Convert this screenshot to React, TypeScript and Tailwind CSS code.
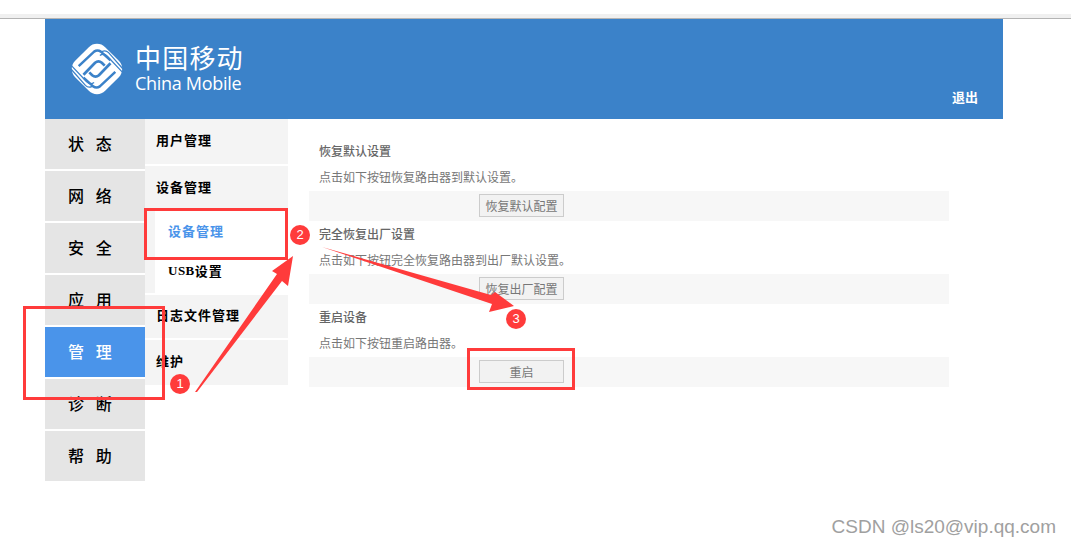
const cjk = "font-['Noto_Sans_CJK_SC',sans-serif]";

const navItems = ["状 态", "网 络", "安 全", "应 用", "管 理", "诊 断", "帮 助"];

const sections = [
  { title: "恢复默认设置", desc: "点击如下按钮恢复路由器到默认设置。", button: "恢复默认配置" },
  { title: "完全恢复出厂设置", desc: "点击如下按钮完全恢复路由器到出厂默认设置。", button: "恢复出厂配置" },
  { title: "重启设备", desc: "点击如下按钮重启路由器。", button: "重启" },
];

const LogoLines = () => (
  <>
    <path d="M9 25 L25 10 Q28.5 7.5 32 10 L42 19" strokeWidth="2.6" />
    <path d="M14 34 L26 21.5 Q29.5 18.5 33 21.5 L36 24.5" strokeWidth="2.8" />
    <path d="M1 24 L17 41 Q21 45 25 42" strokeWidth="1.3" />
    <path d="M1 28 L16 45 Q19 48 23 46" strokeWidth="1.3" />
  </>
);

const Logo = () => (
  <svg width="54" height="54" viewBox="0 0 56 56" className="shrink-0">
    <rect x="6" y="6" width="44" height="44" rx="12" fill="#fff" transform="rotate(45 28 28)" />
    <g fill="none" stroke="#3b82c9" strokeLinecap="butt">
      <LogoLines />
      <g transform="rotate(180 28 28)">
        <LogoLines />
      </g>
    </g>
  </svg>
);

const Annotations = () => (
  <>
    <svg width="1071" height="547" viewBox="0 0 1071 547" className="absolute left-0 top-0 pointer-events-none">
      <polygon points="195,392 277,274 272,271 293,256 288,286 282,281 197,392" fill="#ff3b3b" />
      <polygon points="322,247 491,295 495,292 514,306 489,312 492,304" fill="#ff3b3b" />
    </svg>
    <div className="absolute left-[23px] top-[306px] h-[94px] w-[142px] border-[3px] border-[#ff3b3b]" />
    <div className="absolute left-[144px] top-[208px] h-[52px] w-[144px] border-[3px] border-[#ff3b3b]" />
    <div className="absolute left-[467px] top-[348px] h-[42px] w-[108px] border-[3px] border-[#ff3b3b]" />
    {[
      { n: "1", c: "left-[170px] top-[374px]" },
      { n: "2", c: "left-[290px] top-[225px]" },
      { n: "3", c: "left-[506px] top-[309px]" },
    ].map((b) => (
      <div
        key={b.n}
        className={`absolute ${b.c} flex h-5 w-5 items-center justify-center rounded-full bg-[#ff3b3b] font-['Liberation_Sans',sans-serif] text-[13px] text-white`}
      >
        {b.n}
      </div>
    ))}
  </>
);

export default function App() {
  return (
    <div className={`relative h-[547px] w-[1071px] overflow-hidden bg-white ${cjk}`}>
      <div className="h-[14px]" />
      <div className="h-1 bg-[#f0f0f0]" />
      <div className="h-px bg-[#b4b4b4]" />

      <div className="ml-[45px] w-[958px]">
        <div className="flex h-[100px] bg-[#3b82c9] text-white">
          <div className="ml-[25px] mt-[23px] flex h-[54px] items-start gap-[11px]">
            <Logo />
            <div className="flex flex-col">
              <span className="text-[26px] leading-[30px] tracking-[1.2px]">中国移动</span>
              <span className="font-['Open_Sans',sans-serif] text-[18px] leading-[22px] tracking-[-0.3px]">China Mobile</span>
            </div>
          </div>
          <span className="ml-auto mr-[25px] mt-[70px] h-4 text-[13px] leading-4 font-bold">退出</span>
        </div>

        <div className="flex">
          <div className="flex w-[100px] flex-col gap-[2px]">
            {navItems.map((t) => (
              <div
                key={t}
                className={`flex h-[50px] items-center pb-[2px] pl-[23px] text-[16px] font-medium whitespace-pre tracking-[1.5px] ${
                  t === "管 理" ? "bg-[#4a94ea] text-white" : "bg-[#e5e5e5] text-black"
                }`}
              >
                {t.replace(" ", "  ")}
              </div>
            ))}
          </div>

          <div className="flex h-[266px] w-[143px] flex-col gap-[2px] text-[13px] font-bold tracking-[1px] text-black">
            <div className="flex h-[45px] items-center bg-[#f4f4f4] pb-[4px] pl-[11px]">用户管理</div>
            <div className="flex h-[127px] flex-col bg-[#f4f4f4] pl-[10px]">
              <div className="flex h-[42px] items-center pl-px">设备管理</div>
              <div className="flex flex-1 flex-col bg-white pl-[13px]">
                <div className="flex h-[46px] items-center text-[#4a94ea]">设备管理</div>
                <div className="flex h-[39px] items-center pb-[6px]">
                  <span className="font-['Liberation_Serif',serif] tracking-[0.5px]">USB</span>设置
                </div>
              </div>
            </div>
            <div className="flex h-[43px] items-center bg-[#f4f4f4] pb-[4px] pl-[11px]">日志文件管理</div>
            <div className="flex h-[45px] items-center bg-[#f4f4f4] pb-[4px] pl-[11px]">维护</div>
          </div>

          <div className="ml-[21px] w-[640px] pt-[21px] text-[12px] text-[#777]">
            {sections.map((s) => (
              <div key={s.title} className="h-[83px]">
                <div className="pl-[10px] text-[12px] leading-[22px] font-medium text-[#666]">{s.title}</div>
                <div className="mt-[4px] pl-[10px] leading-[22px]">{s.desc}</div>
                <div className="mt-[3px] flex h-[30px] bg-[#f7f7f7] pl-[170px] pt-[3px]">
                  <button className="h-[23px] w-[85px] border border-[#ccc] bg-[#f2f2f2] text-[12px] text-[#777]">
                    {s.button}
                  </button>
                </div>
              </div>
            ))}
          </div>
        </div>
      </div>

      <Annotations />

      <div className="absolute bottom-[6px] right-[15px] font-['Liberation_Sans',sans-serif] text-[19px] text-[#a0a0a0]">
        CSDN @ls20@vip.qq.com
      </div>
    </div>
  );
}
